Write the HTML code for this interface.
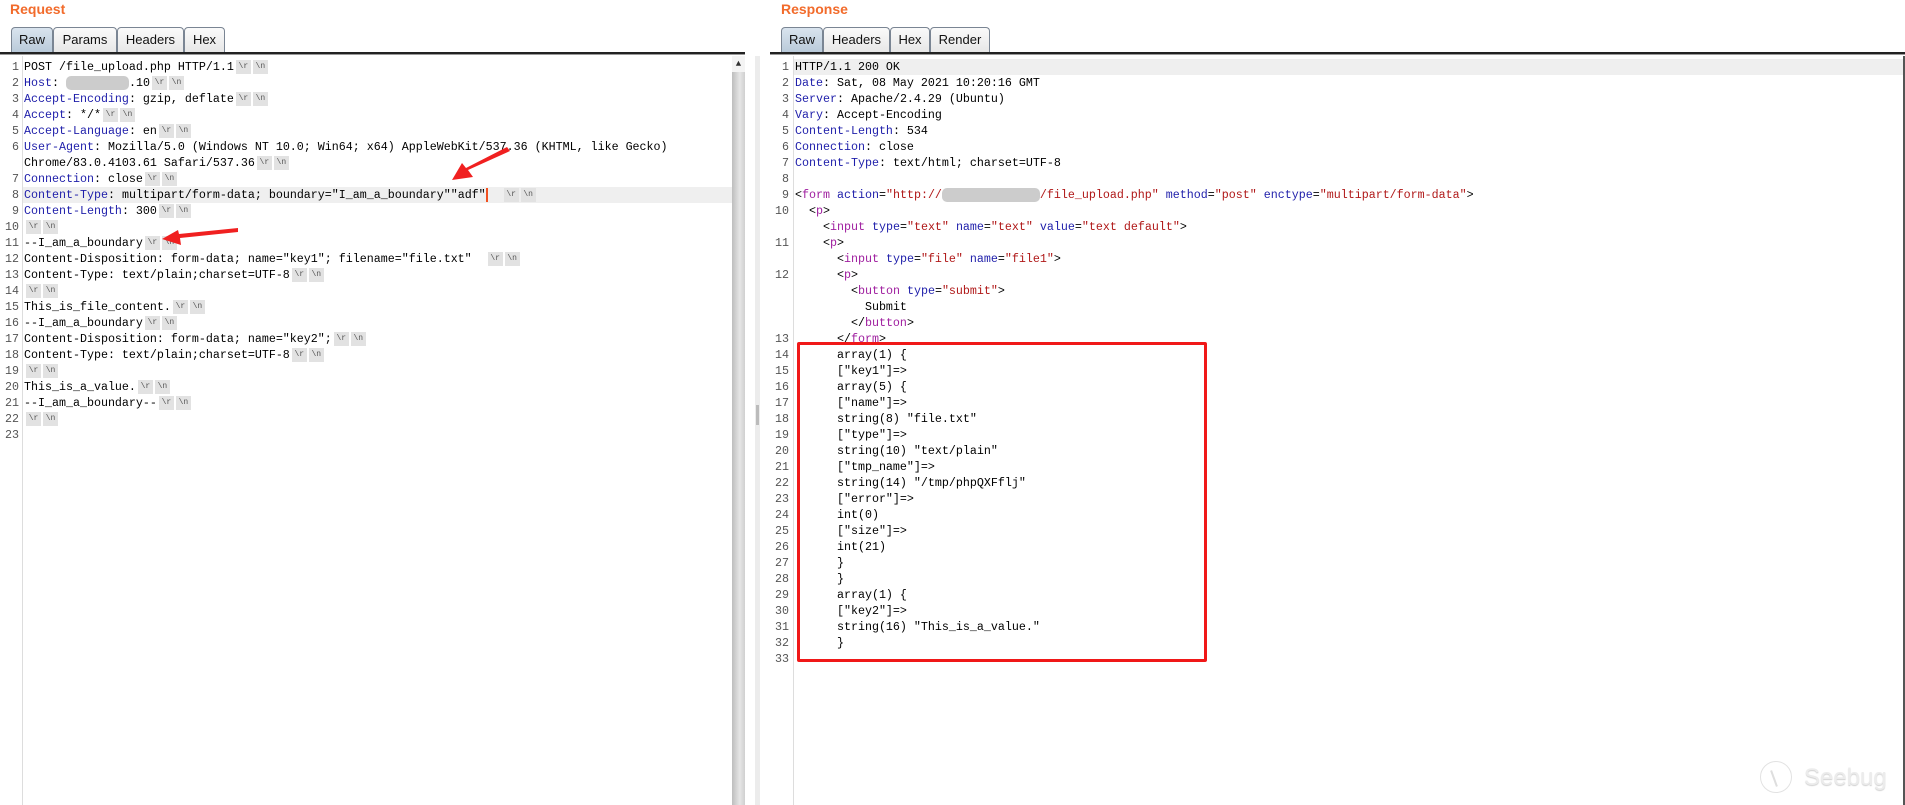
<!DOCTYPE html>
<html><head><meta charset="utf-8">
<style>
*{margin:0;padding:0;box-sizing:border-box}
body{width:1905px;height:805px;background:#fff;position:relative;overflow:hidden;font-family:"Liberation Mono",monospace;}
.title{position:absolute;top:1px;font:bold 14px "Liberation Sans",sans-serif;color:#f26b2b}
.tab{position:absolute;top:27px;height:26px;border:1px solid #7a8593;border-bottom:none;border-radius:4px 4px 0 0;background:linear-gradient(#fafafa,#e6e6e6);font:13px "Liberation Sans",sans-serif;color:#111;text-align:center;line-height:24px}
.tab.sel{background:linear-gradient(#d9e4ee,#b8c9d9)}
.bar{position:absolute;top:52px;height:3px;border-top:2px solid #222;border-bottom:1px solid #999}
.ln{position:absolute;font-size:11.67px;line-height:16px;height:16px;white-space:pre;color:#000}
.num{position:absolute;font-size:11.67px;line-height:16px;color:#555;text-align:right;width:18px}
.k{color:#1e1eaa}.t{color:#a020a0}.a{color:#1e1eaa}.v{color:#b01818}
.e{display:inline-block;background:#e2e2e2;color:#555;font-size:8px;width:15px;height:14px;line-height:14px;text-align:center;margin-left:2px;vertical-align:middle}
</style></head><body>
<div class="title" style="left:10px">Request</div>
<div class="tab sel" style="left:11px;width:42px">Raw</div>
<div class="tab" style="left:53px;width:64px">Params</div>
<div class="tab" style="left:117px;width:67px">Headers</div>
<div class="tab" style="left:184px;width:41px">Hex</div>
<div class="bar" style="left:0;width:745px"></div>
<div style="position:absolute;left:22px;top:56px;width:1px;height:749px;background:#ddd"></div>
<div style="position:absolute;left:23px;top:187px;width:709px;height:16px;background:#efefef"></div>
<div style="position:absolute;left:732px;top:56px;width:13px;height:749px;background:linear-gradient(90deg,#bdbdbd,#e6e6e6 60%,#cfcfcf)"></div>
<div style="position:absolute;left:732px;top:56px;width:13px;height:16px;background:#f4f4f4;font-size:9px;text-align:center;line-height:16px;color:#333">▲</div>
<div style="position:absolute;left:755px;top:56px;width:5px;height:749px;background:#ececec"></div>
<div style="position:absolute;left:756px;top:405px;width:3px;height:20px;background:#bbb"></div>

<div id="L"></div>
<div class="title" style="left:781px">Response</div>
<div class="tab sel" style="left:781px;width:42px">Raw</div>
<div class="tab" style="left:823px;width:67px">Headers</div>
<div class="tab" style="left:890px;width:40px">Hex</div>
<div class="tab" style="left:930px;width:60px">Render</div>
<div class="bar" style="left:770px;width:1135px"></div>
<div style="position:absolute;left:793px;top:56px;width:1px;height:749px;background:#ddd"></div>
<div style="position:absolute;left:794px;top:59px;width:1111px;height:16px;background:#efefef"></div>
<div style="position:absolute;left:1903px;top:56px;width:2px;height:749px;background:#555"></div>
<div id="R"></div>

<div style="position:absolute;left:797px;top:342px;width:410px;height:320px;border:3px solid #f01818;border-radius:2px"></div>

<svg style="position:absolute;left:0;top:0" width="760" height="300">
<polygon points="507,147 510,151 468,170 473,177 452,180 462,163 466,168" fill="#f02020"/>
<polygon points="238,228 238,232 180,238 181,245 162,239 178,230 179,234" fill="#f02020"/>
</svg>

<div style="position:absolute;left:1760px;top:761px;width:32px;height:32px;border:1.5px solid #e2e2e2;border-radius:50%"></div>
<div style="position:absolute;left:1773px;top:770px;width:2px;height:17px;background:#dedede;transform:rotate(-20deg)"></div>
<div style="position:absolute;left:1804px;top:764px;font:24px 'Liberation Sans',sans-serif;color:#ececec;text-shadow:0 1px 1px #d0d0d0">Seebug</div>

<script>
var E='<span class="e">\\r</span><span class="e">\\n</span>';
var L=[
'POST /file_upload.php HTTP/1.1'+E,
'<span class="k">Host</span>: <span style="background:#ccc;color:#ccc;border-radius:5px">00.107.10</span>.10'+E,
'<span class="k">Accept-Encoding</span>: gzip, deflate'+E,
'<span class="k">Accept</span>: */*'+E,
'<span class="k">Accept-Language</span>: en'+E,
'<span class="k">User-Agent</span>: Mozilla/5.0 (Windows NT 10.0; Win64; x64) AppleWebKit/537.36 (KHTML, like Gecko)',
['Chrome/83.0.4103.61 Safari/537.36'+E],
'<span class="k">Connection</span>: close'+E,
'<span class="k">Content-Type</span>: multipart/form-data; boundary="I_am_a_boundary""adf"<span style="border-left:2px solid #f05020"></span>  '+E,
'<span class="k">Content-Length</span>: 300'+E,
E,
'--I_am_a_boundary'+E,
'Content-Disposition: form-data; name="key1"; filename="file.txt"  '+E,
'Content-Type: text/plain;charset=UTF-8'+E,
E,
'This_is_file_content.'+E,
'--I_am_a_boundary'+E,
'Content-Disposition: form-data; name="key2";'+E,
'Content-Type: text/plain;charset=UTF-8'+E,
E,
'This_is_a_value.'+E,
'--I_am_a_boundary--'+E,
E,
''];
function t(n){return '&lt;<span class="t">'+n+'</span>'}
function at(a,v){return ' <span class="a">'+a+'</span>=<span class="v">"'+v+'"</span>'}
var R=[
'HTTP/1.1 200 OK',
'<span class="k">Date</span>: Sat, 08 May 2021 10:20:16 GMT',
'<span class="k">Server</span>: Apache/2.4.29 (Ubuntu)',
'<span class="k">Vary</span>: Accept-Encoding',
'<span class="k">Content-Length</span>: 534',
'<span class="k">Connection</span>: close',
'<span class="k">Content-Type</span>: text/html; charset=UTF-8',
'',
t('form')+' <span class="a">action</span>=<span class="v">"http://<span style="background:#ccc;color:#ccc;border-radius:5px">00.107.100.101</span>/file_upload.php"</span>'+at('method','post')+at('enctype','multipart/form-data')+'&gt;',
'  '+t('p')+'&gt;',
['    '+t('input')+at('type','text')+at('name','text')+at('value','text default')+'&gt;'],
'    '+t('p')+'&gt;',
['      '+t('input')+at('type','file')+at('name','file1')+'&gt;'],
'      '+t('p')+'&gt;',
['        '+t('button')+at('type','submit')+'&gt;'],
['          Submit'],
['        &lt;/<span class="t">button</span>&gt;'],
'      &lt;/<span class="t">form</span>&gt;'];
['array(1) {','["key1"]=>','array(5) {','["name"]=>','string(8) "file.txt"','["type"]=>','string(10) "text/plain"','["tmp_name"]=>','string(14) "/tmp/phpQXFflj"','["error"]=>','int(0)','["size"]=>','int(21)','}','}','array(1) {','["key2"]=>','string(16) "This_is_a_value."','}',''].forEach(function(s){R.push(s?'      '+s:'')});
function draw(arr,id,nx,tx){var h='',row=0,n=0;arr.forEach(function(s){var y=59+row*16;if(typeof s==='string'){n++;h+='<div class="num" style="left:'+nx+'px;top:'+y+'px">'+n+'</div>';}else s=s[0];h+='<div class="ln" style="left:'+tx+'px;top:'+y+'px">'+s+'</div>';row++;});document.getElementById(id).innerHTML=h;}
draw(L,'L',1,24);draw(R,'R',771,795);
</script>
</body></html>
